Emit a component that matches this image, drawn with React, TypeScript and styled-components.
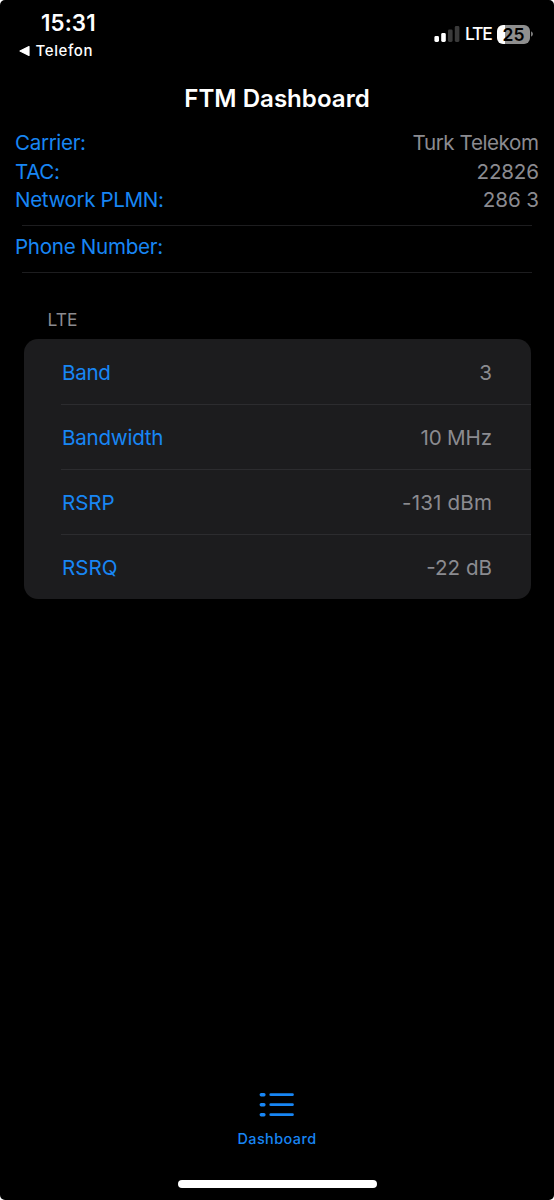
import React from "react";
import styled, { createGlobalStyle } from "styled-components";

const BLUE = "#1886f4";
const GRAY = "#8b8b90";

const GlobalStyle = createGlobalStyle`
  body { margin: 0; background: #fff; }
  * { box-sizing: border-box; }
`;

const Screen = styled.main`
  width: 554px;
  height: 1200px;
  display: flex;
  flex-direction: column;
  overflow: hidden;
  background: #000;
  border-radius: 5px;
  color: #fff;
  font-family: Inter, "Liberation Sans", sans-serif;
  white-space: nowrap;
`;

const StatusBar = styled.header`
  height: 80px;
  display: flex;
  justify-content: space-between;
  padding: 0 21px 0 19px;
`;

const StatusLeft = styled.div`
  display: flex;
  flex-direction: column;
`;

const Time = styled.time`
  margin: 8px 0 0 22px;
  font-size: 22.3px;
  font-weight: 600;
  line-height: 30px;
  letter-spacing: 0.1px;
`;

const BackLink = styled.div`
  display: flex;
  align-items: center;
  gap: 5.5px;
  margin-top: 3px;
  font-size: 15px;
  font-weight: 500;
  line-height: 19px;
  letter-spacing: 0.6px;
`;

const StatusRight = styled.div`
  display: flex;
  align-items: center;
  height: 22px;
  margin-top: 23px;
`;

const NetworkType = styled.span`
  width: 37px;
  padding-left: 5px;
  font-size: 17.5px;
  font-weight: 500;
  line-height: 22px;
  letter-spacing: -1.2px;
`;

const Battery = styled.div`
  width: 33px;
  height: 19px;
  border-radius: 6px;
  background: linear-gradient(to right, #fff 8px, #8f8f8f 8px);
  color: #000;
  font-size: 17.5px;
  font-weight: 600;
  line-height: 19px;
  text-align: center;
`;

const Title = styled.h1`
  height: 36px;
  margin: 0;
  font-size: 24.1px;
  font-weight: 600;
  line-height: 37px;
  text-align: center;
`;

const InfoGroup = styled.section<{ $top: number; $bottom: number }>`
  margin: 0 15px;
  padding: ${(p) => p.$top}px 0 ${(p) => p.$bottom}px;
`;

const InfoRow = styled.div`
  display: flex;
  justify-content: space-between;
  height: 28.5px;
  font-size: 20.6px;
  line-height: 28.5px;
`;

const Label = styled.span<{ $spacing?: number }>`
  color: ${BLUE};
  letter-spacing: ${(p) => p.$spacing ?? 0}px;
`;

const Value = styled.span<{ $spacing?: number }>`
  color: ${GRAY};
  letter-spacing: ${(p) => p.$spacing ?? 0}px;
  margin-right: ${(p) => -(p.$spacing ?? 0)}px;
`;

const Divider = styled.hr`
  width: 510px;
  height: 1px;
  margin: 0 22px;
  border: 0;
  background: #1d1d1f;
`;

const SectionTitle = styled.h2`
  margin: 35px 0 7px 47.5px;
  font-size: 17.4px;
  font-weight: 400;
  line-height: 24px;
  color: ${GRAY};
`;

const Card = styled.section`
  width: 507px;
  margin-left: 24px;
  padding-left: 37px;
  border-radius: 14px;
  background: #1c1c1e;
`;

const CardRow = styled.div`
  display: flex;
  justify-content: space-between;
  height: 65px;
  padding: 0 39px 0 1px;
  font-size: 20.6px;
  line-height: 66px;
  border-top: 1px solid #2c2c2f;

  &:first-child {
    border-top: 0;
    line-height: 67px;
  }
`;

const TabBar = styled.nav`
  display: flex;
  flex-direction: column;
  align-items: center;
  margin-top: auto;
`;

const TabLabel = styled.span`
  margin-top: 12px;
  color: ${BLUE};
  font-size: 14.4px;
  font-weight: 500;
  line-height: 20px;
  letter-spacing: 0.45px;
`;

const HomeIndicator = styled.div`
  width: 199px;
  height: 8px;
  margin: 31px 0 12px;
  border-radius: 4px;
  background: #fff;
`;

const SignalIcon = () => (
  <svg width="26" height="18" viewBox="0 0 26 18">
    <rect x="0.4" y="11" width="4.6" height="6" rx="1.4" fill="#fff" />
    <rect x="7.2" y="8" width="4.6" height="9" rx="1.4" fill="#fff" />
    <rect x="14" y="4.4" width="4.6" height="12.6" rx="1.4" fill="#3a3a3a" />
    <rect x="20.8" y="1" width="4.6" height="16" rx="1.4" fill="#3a3a3a" />
  </svg>
);

const BackIcon = () => (
  <svg width="11" height="12" viewBox="0 0 11 12">
    <path d="M1 6 L10 1.6 V10.4 Z" fill="#fff" stroke="#fff" strokeWidth="1.2" strokeLinejoin="round" />
  </svg>
);

const BatteryTip = () => (
  <svg width="3" height="8" viewBox="0 0 3 8">
    <path d="M1 1.2 Q3 2.2 3 4 Q3 5.8 1 6.8 Z" fill="#7d7d7d" />
  </svg>
);

const ListIcon = () => (
  <svg width="36" height="26" viewBox="0 0 36 26" fill={BLUE}>
    {[2, 12, 22].map((y) => (
      <g key={y}>
        <rect x="0.6" y={y} width="6" height="3.4" rx="1.6" />
        <rect x="10.4" y={y + 0.2} width="24.4" height="2.9" rx="1.3" />
      </g>
    ))}
  </svg>
);

const metrics = [
  { name: "Band", value: "3", nameSpacing: -0.3, valueSpacing: 0 },
  { name: "Bandwidth", value: "10 MHz", nameSpacing: -0.25, valueSpacing: -0.2 },
  { name: "RSRP", value: "-131 dBm", nameSpacing: -0.1, valueSpacing: 0.15 },
  { name: "RSRQ", value: "-22 dB", nameSpacing: 0, valueSpacing: 0 },
];

export default function App() {
  return (
    <>
      <GlobalStyle />
      <Screen>
        <StatusBar>
          <StatusLeft>
            <Time>15:31</Time>
            <BackLink>
              <BackIcon />
              Telefon
            </BackLink>
          </StatusLeft>
          <StatusRight>
            <SignalIcon />
            <NetworkType>LTE</NetworkType>
            <Battery>25</Battery>
            <BatteryTip />
          </StatusRight>
        </StatusBar>
        <Title>FTM Dashboard</Title>
        <InfoGroup $top={13} $bottom={10.5}>
          <InfoRow>
            <Label $spacing={-0.35}>Carrier:</Label>
            <Value $spacing={-0.42}>Turk Telekom</Value>
          </InfoRow>
          <InfoRow>
            <Label $spacing={-0.4}>TAC:</Label>
            <Value $spacing={-0.2}>22826</Value>
          </InfoRow>
          <InfoRow>
            <Label $spacing={-0.38}>Network PLMN:</Label>
            <Value $spacing={-0.1}>286 3</Value>
          </InfoRow>
        </InfoGroup>
        <Divider />
        <InfoGroup $top={6.5} $bottom={11}>
          <InfoRow>
            <Label $spacing={-0.3}>Phone Number:</Label>
          </InfoRow>
        </InfoGroup>
        <Divider />
        <SectionTitle>LTE</SectionTitle>
        <Card>
          {metrics.map((m) => (
            <CardRow key={m.name}>
              <Label $spacing={m.nameSpacing}>{m.name}</Label>
              <Value $spacing={m.valueSpacing}>{m.value}</Value>
            </CardRow>
          ))}
        </Card>
        <TabBar>
          <ListIcon />
          <TabLabel>Dashboard</TabLabel>
          <HomeIndicator />
        </TabBar>
      </Screen>
    </>
  );
}
